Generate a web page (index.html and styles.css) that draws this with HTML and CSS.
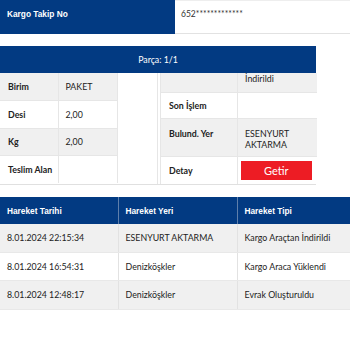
FILE: index.html
```html
<!DOCTYPE html>
<html lang="tr">
<head>
<meta charset="utf-8">
<title>Kargo Takip</title>
<link rel="stylesheet" href="styles.css">
</head>
<body>
<div class="track">
  <div class="track-label">Kargo Takip No</div>
  <div class="track-value">652*************</div>
</div>

<div class="piece">
  <div class="piece-bar">Parça: 1/1</div>
  <div class="piece-body">
    <div class="piece-left">
      <table class="info info-left">
        <colgroup><col class="c-l1"><col class="c-l2"></colgroup>
        <tr class="odd"><th>Birim</th><td>PAKET</td></tr>
        <tr><th>Desi</th><td>2,00</td></tr>
        <tr class="odd"><th>Kg</th><td>2,00</td></tr>
        <tr><th>Teslim Alan</th><td></td></tr>
      </table>
    </div>
    <div class="piece-right">
      <table class="info info-right">
        <colgroup><col class="c-r1"><col class="c-r2"></colgroup>
        <tr class="odd first"><th></th><td>İndirildi</td></tr>
        <tr class="second"><th>Son İşlem</th><td></td></tr>
        <tr class="odd tall"><th>Bulund. Yer</th><td>ESENYURT AKTARMA</td></tr>
        <tr><th>Detay</th><td class="btn-cell"><button class="btn">Getir</button></td></tr>
      </table>
    </div>
  </div>
</div>

<table class="moves">
  <colgroup><col class="c-m1"><col class="c-m2"><col class="c-m3"></colgroup>
  <thead>
    <tr><th>Hareket Tarihi</th><th>Hareket Yeri</th><th>Hareket Tipi</th></tr>
  </thead>
  <tbody>
    <tr class="odd"><td>8.01.2024 22:15:34</td><td>ESENYURT AKTARMA</td><td>Kargo Araçtan İndirildi</td></tr>
    <tr><td>8.01.2024 16:54:31</td><td>Denizköşkler</td><td>Kargo Araca Yüklendi</td></tr>
    <tr class="odd"><td>8.01.2024 12:48:17</td><td>Denizköşkler</td><td>Evrak Oluşturuldu</td></tr>
  </tbody>
</table>
</body>
</html>
```

FILE: styles.css
```css
html, body {
  margin: 0;
  padding: 0;
  background: #ffffff;
}
body {
  width: 350px;
  font-family: Lato, "Open Sans", sans-serif;
  font-size: 8.8px;
  color: #222;
}

/* tracking number row */
.track {
  display: flex;
  height: 34px;
}
.track-label {
  width: 175px;
  box-sizing: border-box;
  background: #023a82;
  color: #fff;
  font-family: "Liberation Sans", Arial, sans-serif;
  font-weight: bold;
  font-size: 8.3px;
  padding: 9px 7px 0;
}
.track-value {
  flex: 1;
  box-sizing: border-box;
  border-top: 1px solid #eeeeee;
  border-bottom: 1px solid #e2e2e2;
  padding: 8px 6px 0;
  font-size: 8.5px;
  color: #333;
}

/* piece block */
.piece {
  width: 316px;
  margin-top: 12px;
}
.piece-bar {
  height: 27px;
  background: #023a82;
  color: #fff;
  display: flex;
  align-items: center;
  justify-content: center;
  font-size: 8.8px;
}
.piece-body {
  display: flex;
  border-bottom: 1px solid #e0e0e0;
  height: 111px;
}
.piece-left {
  width: 158px;
  box-sizing: border-box;
  border-right: 1px solid #e6e6e6;
}
.piece-right {
  width: 158px;
  box-sizing: border-box;
  padding-left: 2px;
}

.info {
  border-collapse: collapse;
  table-layout: fixed;
}
.info th, .info td {
  text-align: left;
  padding: 0 7px;
  height: 27.5px;
  line-height: 11px;
  vertical-align: middle;
  border: 1px solid #e6e6e6;
  box-sizing: border-box;
}
.info th {
  font-weight: bold;
  color: #222;
  white-space: nowrap;
  padding: 0 3px 0 8px;
}
.info tr.odd th, .info tr.odd td {
  background: #f0f0f0;
}
.info-left {
  width: 117px;
}
.c-l1 { width: 58px; }
.c-l2 { width: 59px; }
.info-left th { border-left: 0; }
.info-left tr:first-child th, .info-left tr:first-child td { border-top: 0; }
.info-left tr:last-child th, .info-left tr:last-child td { border-bottom: 0; }

.info-right {
  width: 156px;
}
.c-r1 { width: 77px; }
.c-r2 { width: 79px; }
.info-right td { border-right: 0; }
.info-right tr:last-child th, .info-right tr:last-child td { border-bottom: 0; }
.info-right tr.first th, .info-right tr.first td {
  height: 19px;
  vertical-align: top;
  padding-top: 0;
  border-top: 0;
}
.info-right tr.second th, .info-right tr.second td {
  height: 26px;
}
.info-right tr.tall th, .info-right tr.tall td {
  height: 38px;
  vertical-align: top;
  padding-top: 9px;
}
.info-right .btn-cell {
  padding: 0 5px 0 3px;
}
.btn {
  display: block;
  width: 100%;
  height: 19px;
  border: 0;
  background: #ed1c24;
  color: #fff;
  font-family: Lato, sans-serif;
  font-size: 11px;
  padding: 0;
}

/* movements table */
.moves {
  width: 350px;
  margin-top: 12px;
  border-collapse: collapse;
  table-layout: fixed;
}
.c-m1 { width: 118px; }
.c-m2 { width: 119px; }
.c-m3 { width: 113px; }
.moves th {
  background: #023a82;
  color: #fff;
  font-family: "Liberation Sans", Arial, sans-serif;
  font-weight: bold;
  font-size: 8.3px;
  text-align: left;
  height: 27px;
  padding: 0 7px;
  border-left: 1px solid #5f7fab;
}
.moves th:first-child { border-left: 0; }
.moves td {
  height: 27.5px;
  padding: 0 7px;
  border-left: 1px solid #e2e2e2;
  border-bottom: 1px solid #e8e8e8;
  color: #222;
  white-space: nowrap;
}
.moves td:first-child { border-left: 0; }
.moves tr.odd td { background: #f0f0f0; }
```
